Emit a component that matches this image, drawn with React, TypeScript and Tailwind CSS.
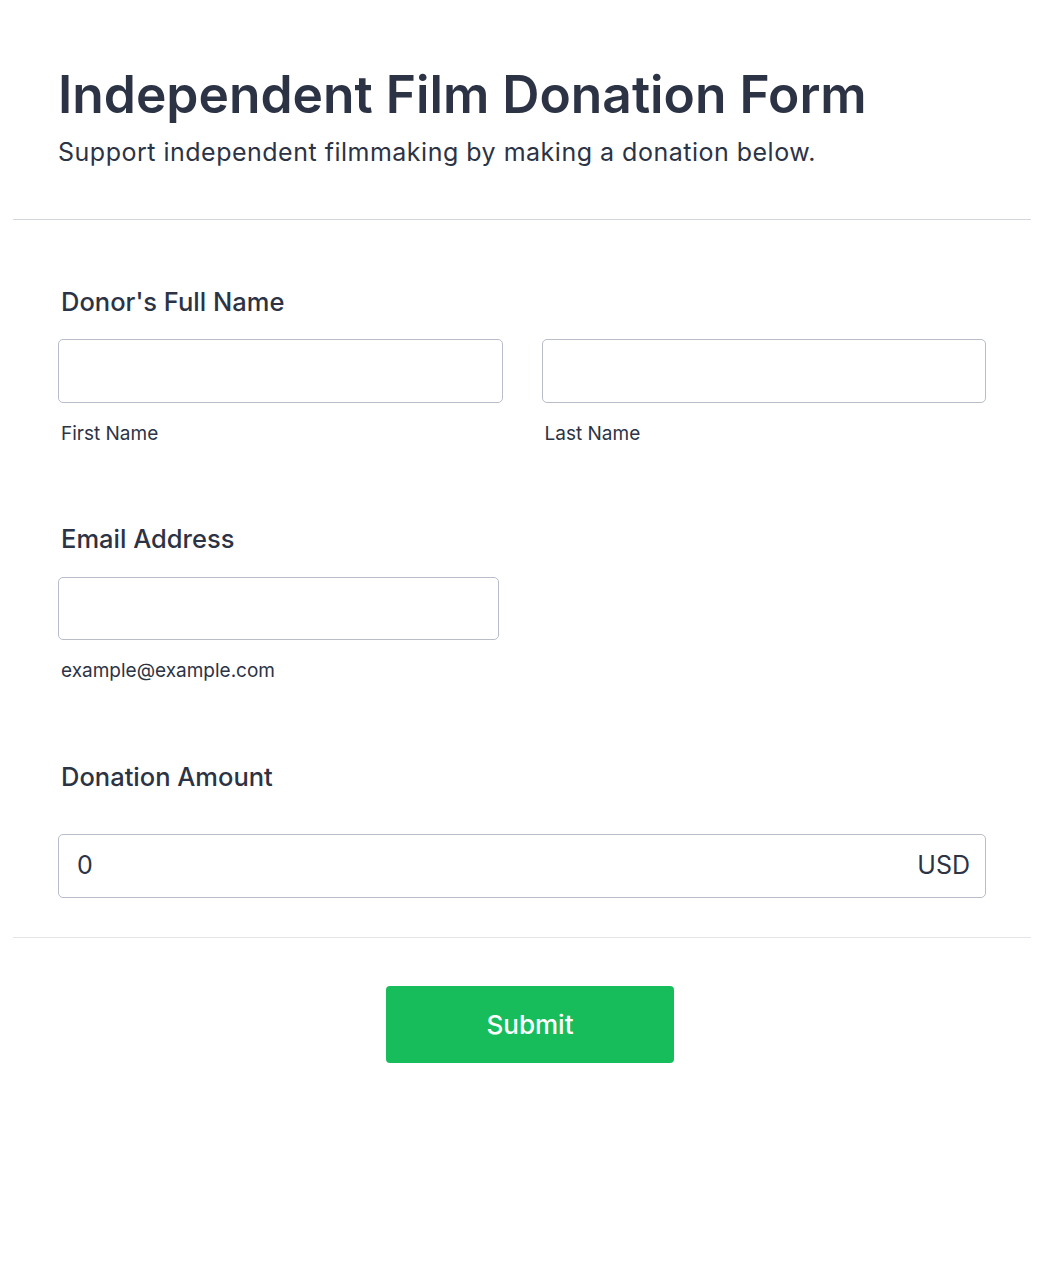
export default function App() {
  const font = { fontFamily: 'Inter, "Noto Sans", sans-serif' };
  return (
    <div className="min-h-[1285px] w-full bg-white text-[#2c3345]" style={font}>
      <div className="px-[13px]">
        <div className="px-[45px] pt-[64px] pb-[49px]">
          <h1 className="text-[51.5px] font-semibold leading-[60px]">
            Independent Film Donation Form
          </h1>
          <p className="mt-[10px] text-[25px] leading-[36px] tracking-[0.5px]">
            Support independent filmmaking by making a donation below.
          </p>
        </div>
        <div className="border-t border-[#d3d6de]" />
        <div className="px-[45px] pt-[64px]">
          <div>
            <div className="pl-[3px] text-[25.5px] font-medium leading-[36px]">Donor's Full Name</div>
            <div className="mt-[19px] grid grid-cols-2 gap-x-[39px]">
              <div>
                <div className="h-[64px] rounded-[5px] border border-[#b8bdc9] bg-white" />
                <div className="mt-[17px] pl-[3px] text-[19px] leading-[27px]">First Name</div>
              </div>
              <div>
                <div className="h-[64px] rounded-[5px] border border-[#b8bdc9] bg-white" />
                <div className="mt-[17px] pl-[3px] text-[19px] leading-[27px]">Last Name</div>
              </div>
            </div>
          </div>
          <div className="mt-[74px]">
            <div className="pl-[3px] text-[25.5px] font-medium leading-[36px]">Email Address</div>
            <div className="mt-[20px] w-[441px]">
              <div className="h-[63px] rounded-[5px] border border-[#b8bdc9] bg-white" />
              <div className="mt-[17px] pl-[3px] text-[19px] leading-[27px]">example@example.com</div>
            </div>
          </div>
          <div className="mt-[75px]">
            <div className="pl-[3px] text-[25.5px] font-medium leading-[36px]">Donation Amount</div>
            <div className="mt-[39px] flex h-[64px] items-center justify-between rounded-[5px] border border-[#b8bdc9] bg-white pl-[18px] pr-[15px] text-[25px]">
              <span>0</span>
              <span>USD</span>
            </div>
          </div>
        </div>
        <div className="mt-[39px] border-t border-[#e3e5ea]" />
        <div className="flex justify-center pt-[48px] pl-[16px]">
          <button className="flex h-[77px] w-[288px] items-center justify-center rounded-[4px] bg-[#18bd5b] text-[26px] font-medium text-white">
            Submit
          </button>
        </div>
      </div>
    </div>
  );
}
